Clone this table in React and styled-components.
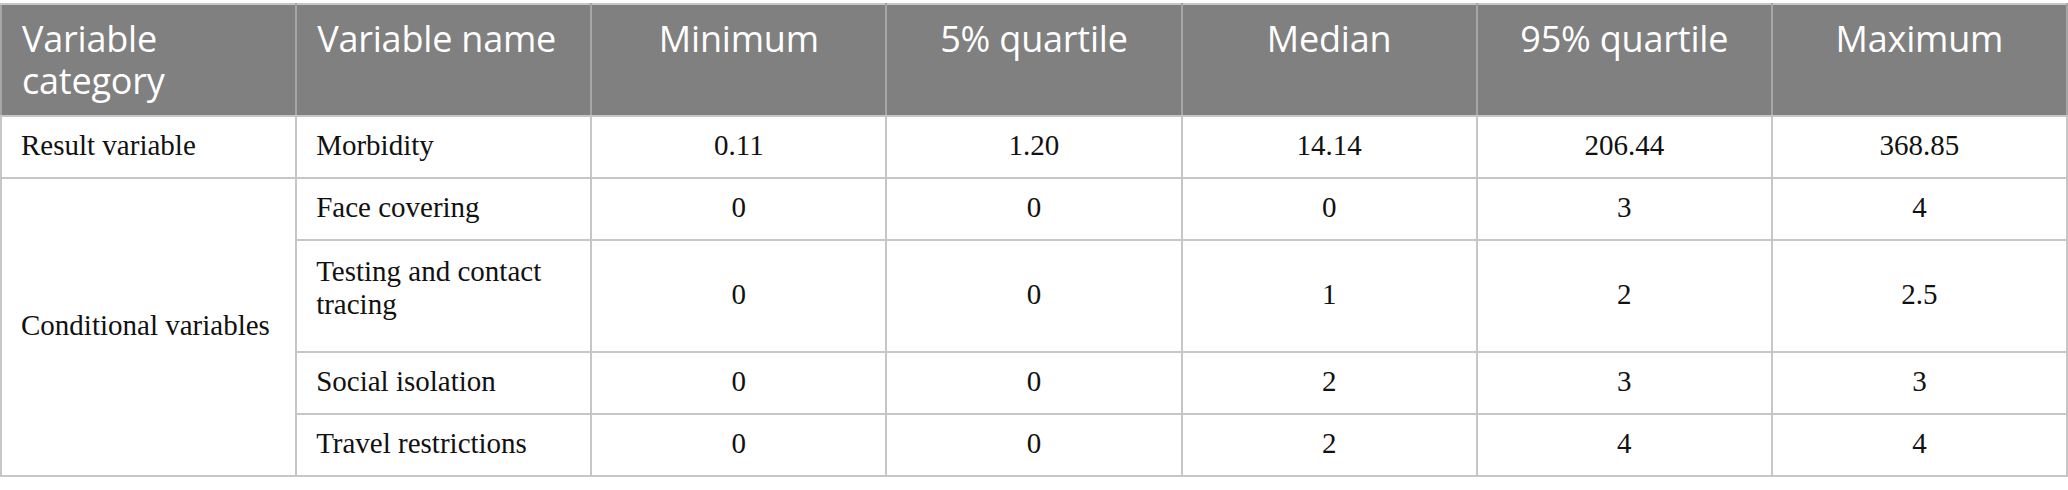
import React from 'react';
import styled, { createGlobalStyle } from 'styled-components';

const GlobalStyle = createGlobalStyle`
  html, body {
    margin: 0;
    padding: 0;
    background: #ffffff;
  }
`;

const Wrapper = styled.div`
  padding-top: 3px;
`;

const Table = styled.table`
  width: 100%;
  table-layout: fixed;
  border-collapse: collapse;
  border: 2px solid #c6c6c6;
`;

const HeadCell = styled.th`
  background: #808080;
  color: #ffffff;
  font-family: "Open Sans", "Noto Sans", sans-serif;
  font-weight: 400;
  font-size: 36px;
  line-height: 42px;
  letter-spacing: -0.2px;
  text-align: ${(p) => (p.left ? 'left' : 'center')};
  vertical-align: top;
  padding: 13px 20px 13px;
  border: 2px solid #a6a6a6;
  border-top-color: #c6c6c6;
  border-bottom-color: #c6c6c6;
  height: 82px;
`;

const Row = styled.tr`
  height: ${(p) => (p.$tall ? '112px' : '62px')};
`;

const Cell = styled.td`
  font-family: "Liberation Serif", "Times New Roman", serif;
  font-size: 29px;
  line-height: 33px;
  color: #111111;
  text-align: ${(p) => (p.left ? 'left' : 'center')};
  vertical-align: middle;
  padding: 4px 19px ${(p) => (p.$raise ? '20px' : '8px')};
  border: 2px solid #c6c6c6;
`;

const columns = ['Minimum', '5% quartile', 'Median', '95% quartile', 'Maximum'];

const rows = [
  { name: 'Face covering', values: ['0', '0', '0', '3', '4'] },
  { name: 'Testing and contact tracing', values: ['0', '0', '1', '2', '2.5'], tall: true },
  { name: 'Social isolation', values: ['0', '0', '2', '3', '3'] },
  { name: 'Travel restrictions', values: ['0', '0', '2', '4', '4'] },
];

export default function App() {
  return (
    <Wrapper>
      <GlobalStyle />
      <Table>
        <thead>
          <tr>
            <HeadCell left>Variable category</HeadCell>
            <HeadCell left>Variable name</HeadCell>
            {columns.map((c) => (
              <HeadCell key={c}>{c}</HeadCell>
            ))}
          </tr>
        </thead>
        <tbody>
          <Row>
            <Cell left>Result variable</Cell>
            <Cell left>Morbidity</Cell>
            {['0.11', '1.20', '14.14', '206.44', '368.85'].map((v, i) => (
              <Cell key={i}>{v}</Cell>
            ))}
          </Row>
          {rows.map((r, idx) => (
            <Row key={r.name} $tall={r.tall}>
              {idx === 0 && (
                <Cell left rowSpan={rows.length}>
                  Conditional variables
                </Cell>
              )}
              <Cell left $raise={r.tall}>{r.name}</Cell>
              {r.values.map((v, i) => (
                <Cell key={i}>{v}</Cell>
              ))}
            </Row>
          ))}
        </tbody>
      </Table>
    </Wrapper>
  );
}
